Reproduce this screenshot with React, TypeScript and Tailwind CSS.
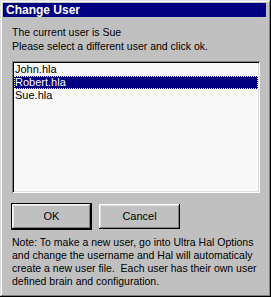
import React from "react";

const users = ["John.hla", "Robert.hla", "Sue.hla"];

const App: React.FC = () => {
  const selected = "Robert.hla";

  return (
    <div className="w-[271px] h-[297px] bg-[#c0c0c0] font-['Liberation_Sans',Arial,sans-serif] text-[10.5px] leading-[13px] text-black shadow-[inset_-1px_-1px_#000,inset_1px_1px_#dfdfdf,inset_-2px_-2px_#808080,inset_2px_2px_#fff] pt-[3px] pl-[3px] pr-[5px]">
      {/* title bar */}
      <div className="h-[14px] bg-[#000080] text-white font-bold text-[12px] leading-[14px] pl-[3px]">
        Change User
      </div>

      <div className="px-[9px]">
        <p className="mt-[9px]">The current user is Sue</p>
        <p className="mt-[1px]">Please select a different user and click ok.</p>

        {/* user list */}
        <div className="mt-[8px] w-[248px] h-[132px] bg-[#f8f8f8] p-[2px] text-[11px] shadow-[inset_1px_1px_#808080,inset_-1px_-1px_#fff,inset_2px_2px_#000,inset_-2px_-2px_#dfdfdf]">
          {users.map((u) =>
            u === selected ? (
              <div key={u} className="h-[13px] leading-[11px] bg-[#000080] text-white border border-dotted border-[#ffff66]">
                {u}
              </div>
            ) : (
              <div key={u} className="h-[13px] pl-[1px]">
                {u}
              </div>
            )
          )}
        </div>

        <div className="mt-[10px] flex items-start text-[11px]">
          <button className="ml-[-1px] w-[81px] h-[27px] border border-black bg-[#c0c0c0] shadow-[inset_-1px_-1px_#000,inset_1px_1px_#fff,inset_-2px_-2px_#808080,inset_2px_2px_#dfdfdf]">
            OK
          </button>
          <button className="ml-[7px] mt-[1px] w-[81px] h-[25px] bg-[#c0c0c0] shadow-[inset_-1px_-1px_#000,inset_1px_1px_#fff,inset_-2px_-2px_#808080,inset_2px_2px_#dfdfdf]">
            Cancel
          </button>
        </div>

        <p className="mt-[6px] whitespace-pre">
          {"Note: To make a new user, go into Ultra Hal Options\nand change the username and Hal will automaticaly\ncreate a new user file.  Each user has their own user\ndefined brain and configuration."}
        </p>
      </div>
    </div>
  );
};

export default App;
